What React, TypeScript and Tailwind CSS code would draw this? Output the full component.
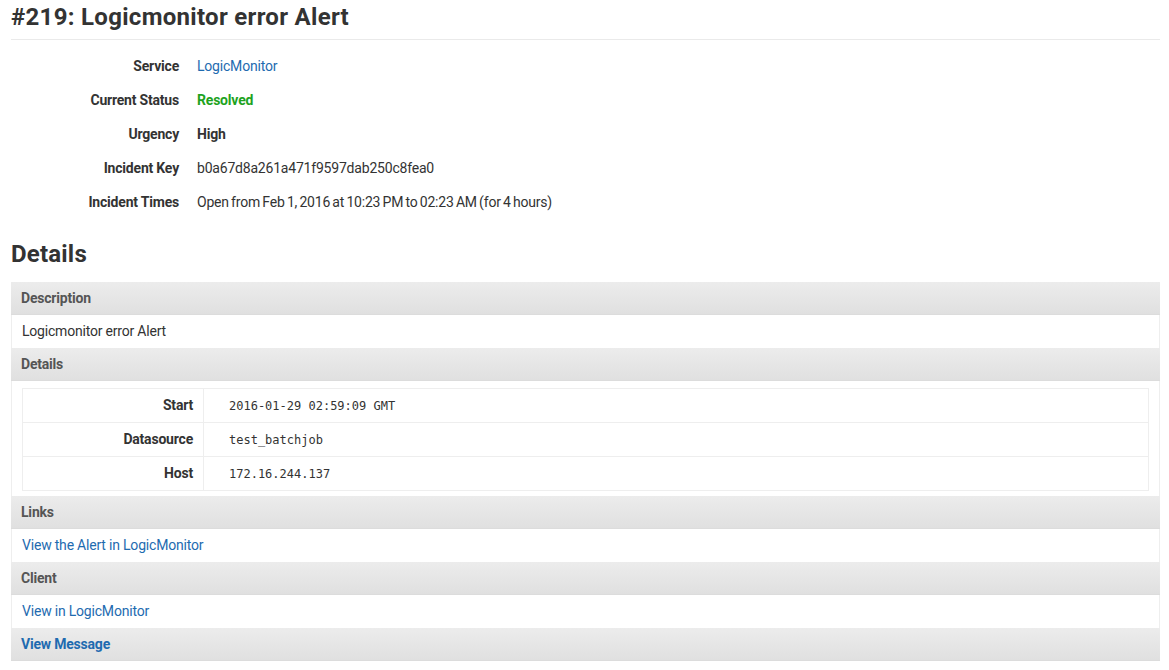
import React from 'react'

const font = { fontFamily: 'Roboto, "Noto Sans", sans-serif' }
const mono = { fontFamily: '"DejaVu Sans Mono", "Liberation Mono", monospace' }

const summary: { label: string; value: React.ReactNode }[] = [
  { label: 'Service', value: <a className="text-[#1e6bb0]">LogicMonitor</a> },
  { label: 'Current Status', value: <span className="font-bold text-[#1ea31e]">Resolved</span> },
  { label: 'Urgency', value: <span className="font-bold">High</span> },
  { label: 'Incident Key', value: 'b0a67d8a261a471f9597dab250c8fea0' },
  { label: 'Incident Times', value: 'Open from Feb 1, 2016 at 10:23 PM to 02:23 AM (for 4 hours)' },
]

const fields = [
  ['Start', '2016-01-29 02:59:09 GMT'],
  ['Datasource', 'test_batchjob'],
  ['Host', '172.16.244.137'],
]

const Head = ({ children, className = '' }: { children: React.ReactNode; className?: string }) => (
  <div className={"h-[33px] flex items-center px-[10px] text-[14px] font-bold bg-gradient-to-b from-[#ececec] to-[#e0e0e0] border-b border-[#dcdcdc] " + className}>
    {children}
  </div>
)

const Body = ({ children }: { children: React.ReactNode }) => (
  <div className="h-[33px] flex items-center px-[10px] text-[14px] bg-white border-x border-[#eee]">{children}</div>
)

export default function App() {
  return (
    <div className="min-h-screen bg-white text-[#333] px-[11px] pr-[9px] tracking-[-0.2px]" style={font}>
      <h1 className="text-[24px] font-bold leading-[34px] pb-[5px] border-b border-[#eaeaea] tracking-[0.3px]">
        #219: Logicmonitor error Alert
      </h1>

      <div className="mt-[9px] flex flex-col">
        {summary.map((r) => (
          <div key={r.label} className="flex h-[34px] items-center text-[14px]">
            <div className="w-[168px] text-right font-bold">{r.label}</div>
            <div className="ml-[18px] [word-spacing:-1px]">{r.value}</div>
          </div>
        ))}
      </div>

      <h2 className="text-[24px] font-bold leading-[34px] mt-[18px] mb-[11px] tracking-[0.2px]">Details</h2>

      <div className="flex flex-col">
        <Head className="text-[#555]">Description</Head>
        <Body>Logicmonitor error Alert</Body>
        <Head className="text-[#555]">Details</Head>
        <div className="bg-white border-x border-[#eee] px-[10px] pt-[7px] pb-[5px]">
          <table className="w-full border-collapse border border-[#eee] text-[14px]">
            <tbody>
              {fields.map(([k, v]) => (
                <tr key={k} className="h-[34px] border-b border-[#eee] last:border-b-0">
                  <td className="w-[181px] text-right font-bold pr-[10px] border-r border-[#eee]">{k}</td>
                  <td className="pl-[25px] text-[12px] tracking-normal" style={mono}>{v}</td>
                </tr>
              ))}
            </tbody>
          </table>
        </div>
        <Head className="text-[#555]">Links</Head>
        <Body><a className="text-[#1e6bb0]">View the Alert in LogicMonitor</a></Body>
        <Head className="text-[#555]">Client</Head>
        <Body><a className="text-[#1e6bb0]">View in LogicMonitor</a></Body>
        <Head className="text-[#1e6bb0]">View Message</Head>
      </div>
    </div>
  )
}
